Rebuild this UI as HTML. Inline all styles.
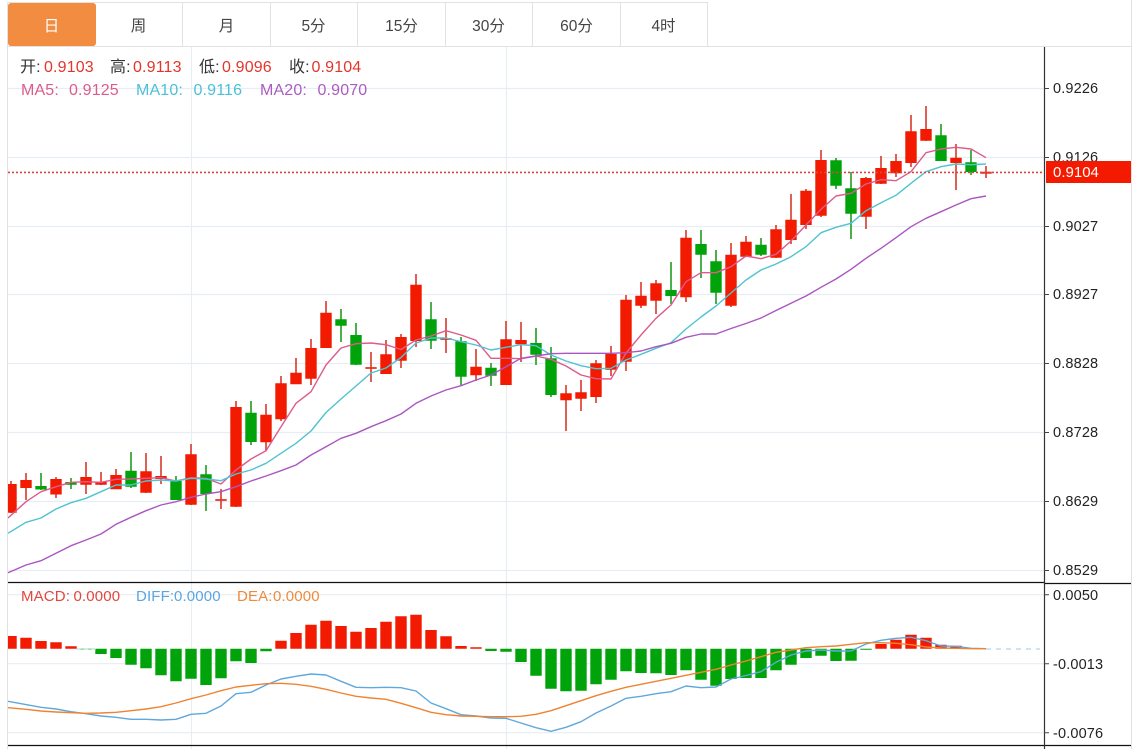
<!DOCTYPE html>
<html lang="zh"><head><meta charset="utf-8"><title>K</title>
<style>
html,body{margin:0;padding:0;background:#fff;width:1139px;height:749px;overflow:hidden}
body{position:relative;font-family:"Liberation Sans","Noto Sans CJK SC",sans-serif}
svg{position:absolute;left:0;top:0}
.t{position:absolute;top:3px;height:43px;line-height:47px;text-align:center;font-size:15.5px;color:#444;width:87px}
.l{position:absolute;height:20px;line-height:20px;font-size:16px;white-space:nowrap;letter-spacing:.15px}
.n{font-size:15px}
.a{position:absolute;left:1053px;height:20px;line-height:20px;font-size:14.5px;letter-spacing:.15px;color:#222;white-space:nowrap}
.r{color:#e2352b}.k{color:#333}.p{color:#dd5b8c}.c{color:#4cc0d6}.v{color:#aa5cc0}.b{color:#5aa5e0}.o{color:#ee8a3c}.m{color:#e2453f}
</style></head><body>
<svg width="1139" height="749" viewBox="0 0 1139 749">
<defs><clipPath id="cp"><rect x="8" y="47" width="1036" height="702"/></clipPath></defs>
<!-- frame -->
<path d="M7.5 2.5H708M7.5 2.5V749M8 46.5H1131.5M1131.5 0V749" fill="none" stroke="#e2e2e2" stroke-width="1"/>
<path d="M182.5 3V46M270.5 3V46M357.5 3V46M445.5 3V46M532.5 3V46M620.5 3V46M707.5 3V46" fill="none" stroke="#e2e2e2"/>
<rect x="8" y="3" width="88" height="43" rx="3" fill="#f28c41"/>
<!-- grid -->
<path d="M8 88.5H1044M8 157.5H1044M8 226.5H1044M8 294.5H1044M8 363.5H1044M8 432.5H1044M8 501.5H1044M8 570.5H1044M8 594.7H1044M8 663.7H1044M8 732.7H1044M191.5 47V749M506.5 47V749" fill="none" stroke="#e8edf3" stroke-width="1.2"/>
<g clip-path="url(#cp)">
<!-- wicks -->
<path fill="none" stroke="#d8392b" stroke-width="1.6" d="M11 481V513M26 473V500M56 477V498M86 462V494M101 472V485M116 469V489M146 453V493M161 456V484M191 444V505M221 489V509M236 401V507M266 404V451M281 376V421M296 358V384M311 339V385M326 301V348M371 352V382M386 340V374M401 334V368M416 274V347M446 318V353M476 349V381M506 321V385M521 322V362M566 385V431M581 380V411M596 360V403M611 346V376M626 295V371M641 282V308M656 280V314M686 230V302M731 243V307M746 236V257M776 225V258M791 194V244M806 189V229M821 150V217M866 177V229M881 156V184M896 154V177M911 115V167M926 106V141M956 144V190M986 166V178"/>
<path fill="none" stroke="#1f9d1f" stroke-width="1.6" d="M41 473V490M71 478V489M131 452V488M176 476V500M206 465V511M251 401V445M341 309V342M356 323V365M431 302V349M461 337V385M491 363V386M536 328V365M551 347V397M671 262V304M701 230V278M716 250V304M761 238V256M836 158V189M851 172V239M941 124V161M971 150V175"/>
<!-- red bodies -->
<path fill="none" stroke="#f21a00" stroke-width="11.4" d="M11 484V512.7M26 480V488M56 479V494.5M86 477V484.7M101 481.7V484.7M116 475V489.3M146 471.3V492.7M161 476V479M191 454.3V504.7M236 407V506.7M266 414.7V442.3M281 383.3V419.3M296 372.7V384.3M311 348V378.7M326 312.7V348M386 354.3V374M401 337V360.7M416 284.7V341M476 366.7V375.3M506 339.3V385M521 340V344.3M566 393.3V400.3M581 392.3V398.7M596 363.3V397M611 354V369.7M626 299.7V361.7M641 295.7V305.7M656 283.3V300.7M686 237.7V297.3M731 254.7V305.7M746 241.7V256.7M776 229.3V257.7M791 219.7V240M806 190.7V225M821 160V215.7M866 178V216.7M881 168V183.7M896 161V173.3M911 131.3V163M926 129V140.7M956 157.7V163"/>
<path fill="none" stroke="#e8301c" stroke-width="11.4" d="M221 499.1V500.9M371 367.1V368.9M446 338.1V339.9M986 171.7V173.7"/>
<!-- green bodies -->
<path fill="none" stroke="#00a30a" stroke-width="11.4" d="M41 486V489.5M71 482V484.7M131 470.7V486.7M176 481V500M206 474.3V494M251 412.7V442M341 319.3V325.7M356 335V364.7M431 319.3V340.7M461 341.3V376.7M491 367.7V375.7M536 343V354.7M551 358.3V395M671 290V296M701 244V254.7M716 261.3V292.7M761 244.7V254.7M836 160.3V185.7M851 188.3V213.7M941 135.3V161M971 162.3V172"/>
<!-- MA lines -->
<path fill="none" stroke="#dd5b8c" stroke-width="1.4" stroke-linejoin="round" d="M8 518L26 501.7L41 491.7L56 486.7L71 482.3L86 481.7L101 482.3L116 479.3L131 479L146 478.3L161 477.7L176 481L191 477.7L206 478.3L221 484L236 470L251 459L266 450.7L281 426.7L296 403.3L311 391.7L326 365L341 348L356 343.7L371 343L386 344.7L401 349.5L416 340L431 336L446 330.7L461 335L476 340.3L491 358.3L506 358.3L521 358.7L536 356L551 359.3L566 366L581 375L596 378.7L611 379L626 353L641 335L656 318.3L671 305L686 281.7L701 272.7L716 272.7L731 266.7L746 256L761 258.7L776 254.3L791 241L806 225L821 209.3L836 196L851 193.3L866 184L881 179.7L896 180.7L911 171.7L926 152.7L941 149L956 147.3L971 149L986 157.7"/>
<path fill="none" stroke="#4fc3d0" stroke-width="1.4" stroke-linejoin="round" d="M8 533.3L26 522.3L41 518L56 509L71 502.7L86 498.3L101 491.7L116 485L131 485L146 481L161 480L176 481L191 478.3L206 479L221 480.7L236 474L251 470L266 463.3L281 453.3L296 443.3L311 431L326 412.5L341 399L356 386L371 373L386 368L401 357.5L416 343L431 338L446 338L461 341.7L476 345L491 350L506 347.3L521 344.7L536 345.7L551 355L566 361L581 365.7L596 368.7L611 368.3L626 360L641 354.3L656 348.3L671 342.7L686 329L701 317L716 306L731 293L746 280L761 270L776 264L791 256.7L806 246.7L821 232.7L836 227.3L851 223.3L866 210.7L881 202.7L896 195.3L911 183.3L926 171.7L941 166.7L956 164L971 164.7L986 164"/>
<path fill="none" stroke="#ab56c0" stroke-width="1.4" stroke-linejoin="round" d="M8 572.7L26 565L41 560.7L56 553.3L71 545.7L86 540L101 534L116 524.3L131 517.3L146 510.7L161 505L176 501.7L191 497.3L206 494L221 491.7L236 486.7L251 481L266 476L281 470.7L296 465L311 455L326 446.7L341 438.3L356 433.3L371 426.7L386 420.7L401 414L416 403.3L431 396L446 390L461 385.7L476 380L491 375L506 366.7L521 358.3L536 356L551 353.7L566 353.3L581 353.3L596 353.3L611 353.3L626 352.7L641 351L656 346.7L671 343.3L686 337.3L701 334L716 334L731 328.5L746 323.5L761 318L776 310.5L791 303.3L806 296L821 287.3L836 279L851 269.3L866 258.3L881 248.3L896 237.7L911 226.7L926 218.3L941 211.7L956 205L971 198.7L986 196"/>
<!-- last price line -->
<path d="M8 172.4H1044" fill="none" stroke="#d9463a" stroke-width="1.6" stroke-dasharray="2 2"/>
<!-- MACD bars -->
<path fill="none" stroke="#f21a00" stroke-width="11.4" d="M11 636V648.7M26 637.7V648.7M41 641V648.7M56 642.3V648.7M71 646.3V648.7M281 640.7V648.7M296 633V648.7M311 624.7V648.7M326 620.7V648.7M341 626V648.7M356 631.7V648.7M371 628V648.7M386 621.7V648.7M401 616.3V648.7M416 614.7V648.7M431 630V648.7M446 636.3V648.7M461 646V648.7M476 647.3V648.7M881 644V648.7M896 639.7V648.7M911 634.7V648.7M926 637.7V648.7M941 644.7V648.7M956 645.7V648.7"/>
<path fill="none" stroke="#00a30a" stroke-width="11.4" d="M86 648.7V649.4M101 648.7V654M116 648.7V658M131 648.7V664.7M146 648.7V668.3M161 648.7V675.3M176 648.7V681.3M191 648.7V678.7M206 648.7V685M221 648.7V678.3M236 648.7V661.3M251 648.7V663M266 648.7V651.3M491 648.7V651M506 648.7V651.7M521 648.7V662M536 648.7V675.7M551 648.7V688.7M566 648.7V691.3M581 648.7V690.7M596 648.7V684.3M611 648.7V679.7M626 648.7V671.3M641 648.7V673M656 648.7V673.3M671 648.7V675M686 648.7V670.3M701 648.7V679.7M716 648.7V685.7M731 648.7V679M746 648.7V678M761 648.7V678M776 648.7V670.3M791 648.7V664.7M806 648.7V658M821 648.7V655.7M836 648.7V661M851 648.7V660.7M866 648.7V649.7"/>
<path d="M986 649H1040" fill="none" stroke="#a8d8ec" stroke-width="1.3" stroke-dasharray="5 5"/>
<path d="M76 649H100" fill="none" stroke="#a8d8c8" stroke-width="1" stroke-dasharray="4 4"/>
<!-- DIFF / DEA -->
<path fill="none" stroke="#5fa8dc" stroke-width="1.4" stroke-linejoin="round" d="M8 701.3L41 707.3L56 709L71 711.7L86 713.7L101 716L116 717.3L131 719.3L146 719.3L161 720L176 719.3L191 714.3L206 713.3L221 706L236 693.7L251 692.3L266 685L281 679L296 676.3L311 674L326 675L341 681.3L356 687.3L371 687.7L386 687.3L401 687.7L416 691L431 703L446 708.7L461 714.7L476 716L491 718L506 718.3L521 723L536 727.7L551 731.3L566 727.3L581 721.7L596 713L611 706L626 698.3L641 696.3L656 693.7L671 691.7L686 686L701 687.7L716 687L731 679L746 675.5L761 671.7L776 662.3L791 655L806 651L821 650L836 651L851 651L866 644L881 640.3L896 638.3L911 637.3L926 640.7L941 646L956 646.3L971 648.3L986 648.7"/>
<path fill="none" stroke="#ee8433" stroke-width="1.4" stroke-linejoin="round" d="M8 707.7L26 709.3L41 711L56 712L71 712.7L86 713.3L101 713L116 712.3L131 710.7L146 709L161 706.7L176 703L191 698.7L206 695L221 690.7L236 687L251 685.3L266 683.7L281 683.3L296 684.3L311 686.3L326 689.3L341 693L356 696.3L371 698L386 699.3L401 703.3L416 707.7L431 712.3L446 714.7L461 716L476 716.3L491 716.7L506 716.7L521 716.3L536 714.3L551 710.7L566 705.7L581 700.7L596 695.7L611 691.3L626 687.3L641 684.3L656 681.3L671 678.3L686 675.3L701 672.3L716 669.3L731 665L746 661L761 656.7L776 652.3L791 650L806 647.7L821 646.7L836 646L851 644.3L866 642.7L881 642.7L896 643.3L911 644.7L926 647L941 648L956 648.3L971 648.7L986 648.7"/>
</g>
<!-- separators -->
<path d="M8 582.5H1044M1044 583.5H1131M8 745.5H1131" fill="none" stroke="#111" stroke-width="1.2"/>
<path d="M1044.5 47V749" fill="none" stroke="#333" stroke-width="1.2"/>
<path d="M1044 88.5H1049M1044 157.5H1049M1044 226.5H1049M1044 294.5H1049M1044 363.5H1049M1044 432.5H1049M1044 501.5H1049M1044 570.5H1049M1044 594.7H1049M1044 663.7H1049M1044 732.7H1049" fill="none" stroke="#444"/>
</svg>
<div class="t" style="left:8px;color:#fff">日</div>
<div class="t" style="left:95px">周</div>
<div class="t" style="left:183px">月</div>
<div class="t" style="left:270px">5分</div>
<div class="t" style="left:358px">15分</div>
<div class="t" style="left:445px">30分</div>
<div class="t" style="left:533px">60分</div>
<div class="t" style="left:620px">4时</div>

<div class="l k" style="left:20px;top:58px">开:</div><div class="l r" style="left:44px;top:58px">0.9103</div>
<div class="l k" style="left:110px;top:58px">高:</div><div class="l r" style="left:133px;top:58px">0.9113</div>
<div class="l k" style="left:199px;top:58px">低:</div><div class="l r" style="left:222px;top:58px">0.9096</div>
<div class="l k" style="left:289px;top:58px">收:</div><div class="l r" style="left:311.5px;top:58px">0.9104</div>

<div class="l p" style="left:21px;top:81px">MA5:</div><div class="l p" style="left:69px;top:81px">0.9125</div>
<div class="l c" style="left:136px;top:81px">MA10:</div><div class="l c" style="left:193.5px;top:81px">0.9116</div>
<div class="l v" style="left:260px;top:81px">MA20:</div><div class="l v" style="left:317.5px;top:81px">0.9070</div>

<div class="l n m" style="left:21px;top:587px">MACD:</div><div class="l n m" style="left:73.5px;top:587px">0.0000</div>
<div class="l n b" style="left:136px;top:587px">DIFF:</div><div class="l n b" style="left:174px;top:587px">0.0000</div>
<div class="l n o" style="left:237px;top:587px">DEA:</div><div class="l n o" style="left:273px;top:587px">0.0000</div>

<div class="a" style="top:79px">0.9226</div>
<div class="a" style="top:148px">0.9126</div>
<div class="a" style="top:217px">0.9027</div>
<div class="a" style="top:285px">0.8927</div>
<div class="a" style="top:354px">0.8828</div>
<div class="a" style="top:423px">0.8728</div>
<div class="a" style="top:492px">0.8629</div>
<div class="a" style="top:561px">0.8529</div>
<div class="a" style="top:586px">0.0050</div>
<div class="a" style="top:655px">-0.0013</div>
<div class="a" style="top:724px">-0.0076</div>
<div style="position:absolute;left:1046px;top:161px;width:85px;height:22px;background:#f41a00"></div>
<div class="a" style="top:163px;color:#fff;font-size:15px;letter-spacing:0">0.9104</div>
</body></html>
